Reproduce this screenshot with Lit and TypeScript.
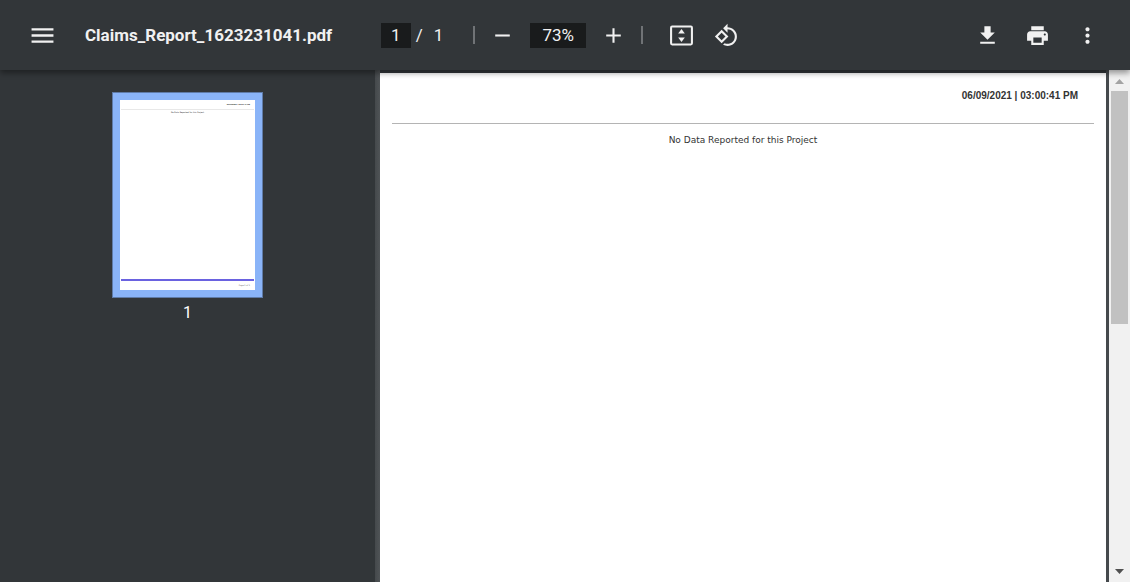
import { LitElement, html, css, svg } from "lit";
import { customElement, property, state } from "lit/decorators.js";

const icons: Record<string, unknown> = {
  menu: svg`<path d="M1.500 19h21v-2.300h-21V19zm0-5.900h21v-2.200h-21v2.200zM1.500 5v2.300h21V5h-21z"/>`,
  minus: svg`<path d="M5 11h14v2H5z"/>`,
  plus: svg`<path d="M19 13h-6v6h-2v-6H5v-2h6V5h2v6h6z"/>`,
  fit: svg`<path fill-rule="evenodd" d="M3 2.500h18a2 2 0 0 1 2 2v15a2 2 0 0 1-2 2H3a2 2 0 0 1-2-2v-15a2 2 0 0 1 2-2zm0 1.900v15.200h18V4.400z"/><path d="M12 5.700l3.200 4.300H8.800zM12 18.300l3.200-4.300H8.800z"/>`,
  rotate: svg`<path d="M7.340 6.410L.860 12.900l6.490 6.480 6.490-6.480-6.500-6.490zM3.690 12.900l3.660-3.660L11 12.900l-3.660 3.660-3.650-3.660zm15.670-6.260C17.610 4.880 15.300 4 13 4V.760L8.760 5 13 9.240V6c1.790 0 3.580.680 4.950 2.050 2.730 2.730 2.730 7.170 0 9.900C16.580 19.320 14.790 20 13 20c-.970 0-1.940-.210-2.840-.610l-1.490 1.490C10.020 21.620 11.510 22 13 22c2.300 0 4.610-.880 6.360-2.640 3.520-3.510 3.520-9.210 0-12.720z"/>`,
  download: svg`<path d="M19 9h-4V3H9v6H5l7 7 7-7zM5 18v2h14v-2H5z"/>`,
  print: svg`<path d="M19 8H5c-1.660 0-3 1.340-3 3v6h4v4h12v-4h4v-6c0-1.660-1.340-3-3-3zm-3 11H8v-5h8v5zm3-7c-.550 0-1-.450-1-1s.450-1 1-1 1 .450 1 1-.450 1-1 1zm-1-9H6v4h12V3z"/>`,
  more: svg`<path d="M12 8c1.100 0 2-.900 2-2s-.900-2-2-2-2 .900-2 2 .900 2 2 2zm0 2c-1.100 0-2 .900-2 2s.900 2 2 2 2-.900 2-2-.900-2-2-2zm0 6c-1.100 0-2 .900-2 2s.900 2 2 2 2-.900 2-2-.900-2-2-2z"/>`,
};

@customElement("icon-button")
class IconButton extends LitElement {
  @property() icon = "menu";
  @property() label = "";

  static styles = css`
    :host { display: block; }
    .button {
      display: flex;
      align-items: center;
      justify-content: center;
      width: 37px;
      height: 37px;
      padding: 0;
      border: 0;
      border-radius: 50%;
      background: none;
      color: #f1f1f1;
      cursor: pointer;
    }
    .button:hover { background: rgba(255, 255, 255, 0.08); }
    .glyph { width: 25px; height: 25px; fill: currentColor; flex: none; }
  `;

  render() {
    return html`<button class="button" type="button" aria-label=${this.label}>
      <svg class="glyph" viewBox="0 0 24 24" aria-hidden="true">${icons[this.icon]}</svg>
    </button>`;
  }
}

@customElement("viewer-toolbar")
class ViewerToolbar extends LitElement {
  static styles = css`
    :host {
      display: grid;
      grid-template-columns: 1fr auto 1fr;
      align-items: center;
      box-sizing: border-box;
      height: 70px;
      padding: 0 24px;
      background: #323639;
      color: #f1f1f1;
      font: 17px/25px Roboto, sans-serif;
    }
    .group { display: flex; align-items: center; }
    .start { gap: 24px; }
    .end { gap: 13px; justify-content: flex-end; }
    .center { padding-right: 4px; }
    .title { margin: 0; font-size: 17px; line-height: 27px; font-weight: 700; white-space: nowrap; }
    .field {
      box-sizing: border-box;
      height: 25px;
      padding: 0;
      border: 0;
      background: #191b1c;
      color: #f1f1f1;
      font: inherit;
      text-align: center;
    }
    .page { width: 30px; }
    .zoom { width: 56px; margin: 0 9px; }
    .total { display: flex; gap: 11px; padding-left: 5px; }
    .rule { width: 2px; height: 18px; background: #707376; }
    .first { margin: 0 9px 0 30px; }
    .second { margin: 0 20px 0 9px; }
    .rotate { margin-left: 8px; }
  `;

  @state() private zoom = "73%";

  render() {
    return html`
      <div class="group start">
        <icon-button icon="menu" label="Menu"></icon-button>
        <h1 class="title">Claims_Report_1623231041.pdf</h1>
      </div>
      <div class="group center">
        <input class="field page" aria-label="Page number" value="1" />
        <span class="total"><span>/</span><span>1</span></span>
        <span class="rule first"></span>
        <icon-button icon="minus" label="Zoom out"></icon-button>
        <input class="field zoom" aria-label="Zoom level" .value=${this.zoom} />
        <icon-button icon="plus" label="Zoom in"></icon-button>
        <span class="rule second"></span>
        <icon-button icon="fit" label="Fit to page"></icon-button>
        <icon-button class="rotate" icon="rotate" label="Rotate counterclockwise"></icon-button>
      </div>
      <div class="group end">
        <icon-button icon="download" label="Download"></icon-button>
        <icon-button icon="print" label="Print"></icon-button>
        <icon-button icon="more" label="More actions"></icon-button>
      </div>
    `;
  }
}

@customElement("page-thumbnail")
class PageThumbnail extends LitElement {
  static styles = css`
    :host {
      display: flex;
      flex-direction: column;
      align-items: center;
      gap: 4px;
      color: #fff;
      font: 16px/22px Roboto, sans-serif;
    }
    .frame {
      padding: 7px;
      border: 1px solid #5f7ba8;
      background: #8ab4f8;
      cursor: pointer;
    }
    .sheet {
      display: flex;
      flex-direction: column;
      box-sizing: border-box;
      width: 135px;
      height: 190px;
      padding: 2px 1px 3px;
      background: #fff;
      color: #222;
      font: 2px/4px "DejaVu Sans", sans-serif;
    }
    .date { padding: 0 4px 3px; font-family: "Liberation Sans", sans-serif; font-weight: 700; text-align: right; }
    .message { border-top: 1px solid #e8e8e8; text-align: center; }
    .footer { margin-top: auto; padding: 2px 4px 0; border-top: 2px solid #6a62e0; text-align: right; color: #666; }
  `;

  render() {
    return html`
      <div class="frame">
        <div class="sheet">
          <div class="date">06/09/2021 | 03:00:41 PM</div>
          <div class="message">No Data Reported for this Project</div>
          <div class="footer">Page 1 of 1</div>
        </div>
      </div>
      <span>1</span>
    `;
  }
}

@customElement("app-root")
class AppRoot extends LitElement {
  static styles = css`
    :host {
      display: flex;
      flex-direction: column;
      height: 100vh;
      overflow: hidden;
      background: #323639;
    }
    .toolbar {
      z-index: 1;
      flex: none;
      box-shadow: 0 3px 6px rgba(0, 0, 0, 0.4);
    }
    .body { display: flex; flex: 1; min-height: 0; }
    .sidebar {
      flex: none;
      box-sizing: border-box;
      width: 375px;
      padding-top: 22px;
      background: #323639;
    }
    .viewport {
      display: flex;
      flex: 1;
      min-width: 0;
      padding: 0 3px 0 5px;
      background: linear-gradient(90deg, #45494c, #505457 5px, #45494c);
    }
    .document {
      flex: 1;
      min-width: 0;
      border-top: 3px solid #323639;
      padding: 0 12px;
      background: #fff;
      color: #333;
    }
    .date {
      padding: 15px 16px 20px;
      border-bottom: 1px solid #b4b4b4;
      font: 700 10px/15px "Liberation Sans", Arial, sans-serif;
      text-align: right;
    }
    .message {
      margin: 0;
      padding-top: 9px;
      font: 9px/15px "DejaVu Sans", Verdana, sans-serif;
      text-align: center;
    }
    .scrollbar {
      display: flex;
      flex-direction: column;
      align-items: center;
      flex: none;
      width: 21px;
      background: #f1f1f1;
    }
    .arrow { flex: none; width: 17px; height: 21px; }
    .up { fill: #a3a3a3; }
    .down { fill: #505050; }
    .track { display: flex; flex-direction: column; flex: 1; width: 17px; padding-bottom: 4px; }
    .thumb { height: 50%; background: #c1c1c1; }
  `;

  render() {
    return html`
      <viewer-toolbar class="toolbar"></viewer-toolbar>
      <div class="body">
        <aside class="sidebar"><page-thumbnail></page-thumbnail></aside>
        <main class="viewport">
          <article class="document">
            <div class="date">06/09/2021 | 03:00:41 PM</div>
            <p class="message">No Data Reported for this Project</p>
          </article>
        </main>
        <div class="scrollbar">
          <svg class="arrow up" viewBox="0 0 17 21" aria-hidden="true"><path d="M4 14h9L8.500 9z"/></svg>
          <div class="track"><div class="thumb"></div></div>
          <svg class="arrow down" viewBox="0 0 17 21" aria-hidden="true"><path d="M4 8h9L8.500 13z"/></svg>
        </div>
      </div>
    `;
  }
}
